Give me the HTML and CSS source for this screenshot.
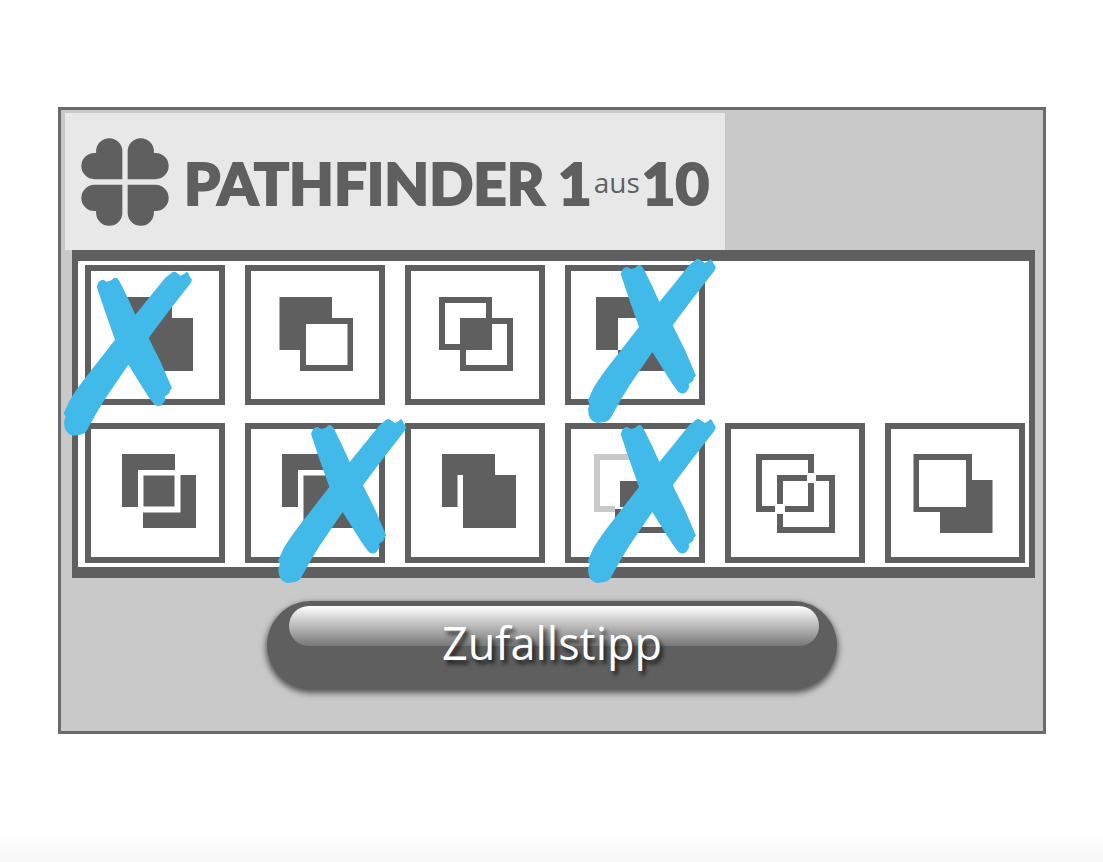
FILE: index.html
```html
<!DOCTYPE html>
<html lang="de">
<head>
    <meta charset="UTF-8">
    <title>Pathfinder 1 aus 10</title>
    <link rel="stylesheet" href="styles.css">
</head>
<body>
    <svg class="defs" aria-hidden="true">
        <defs>
            <path id="leaf" d="M217 237H133A39.500 39.500 0 0 1 133 158H138V153A39.500 39.500 0 0 1 217 153Z"/>
            <path id="cross" d="M212 72L218 58Q224 51 232 51L242 57L256 53L264 46Q270 44 274 47L280 55L305 105L328 156L380 92L418 45L440 28Q446 26 450 29L464 39L475 33L482 27L487 32L490 40L498 52L492 64L430 143L368 226L405 300L438 377L431 384L430 392L416 402L418 412L408 427Q398 434 386 427Q366 402 350 375L307 306L260 375Q235 410 215 445L180 507Q174 514 163 516L142 519Q134 518 128 513Q120 507 116 495L114 477L119 462L113 452L130 415Q150 380 190 330L267 231L240 155Z"/>
        </defs>
    </svg>
    <form class="ticket">
        <header class="head">
            <svg class="clover" viewBox="93 113 264 265" aria-hidden="true">
                <use href="#leaf"/>
                <use href="#leaf" transform="translate(450 0) scale(-1 1)"/>
                <use href="#leaf" transform="translate(0 491) scale(1 -1)"/>
                <use href="#leaf" transform="translate(450 491) scale(-1 -1)"/>
            </svg>
            <h1>PATHFINDER 1<small>aus</small>10</h1>
        </header>
        <div class="board">
            <label class="field">
                <input type="checkbox" aria-label="Vereinen" checked>
                <svg class="icon" viewBox="0 0 140 140"><path d="M35 32H87V53H108V106H55V85H35Z"/></svg>
                <svg class="cross" viewBox="177 7 420 420"><use href="#cross"/></svg>
            </label>
            <label class="field">
                <input type="checkbox" aria-label="Vorderes Objekt abziehen">
                <svg class="icon" viewBox="0 0 140 140"><path d="M34.500 32H87V53H108V106H55V85H34.500ZM61 59V100H102.500V59Z"/></svg>
            </label>
            <label class="field">
                <input type="checkbox" aria-label="Schnittmenge bilden">
                <svg class="icon" viewBox="0 0 140 140"><path class="line" d="M37 35H84V82H37ZM58 56H105V103H58Z"/><path d="M55 53H87V85H55Z"/></svg>
            </label>
            <label class="field">
                <input type="checkbox" aria-label="Schnittmenge entfernen" checked>
                <svg class="icon" viewBox="0 0 140 140"><path d="M31 32H84V85H31ZM53 53H106V106H53Z"/></svg>
                <svg class="cross" viewBox="45 45 420 420"><use href="#cross"/></svg>
            </label>
            <label class="field next-row">
                <input type="checkbox" aria-label="Fläche aufteilen">
                <svg class="icon" viewBox="0 0 140 140"><path d="M37 31H90V47H53V84H37ZM58.500 52.500H89.500V83.500H58.500ZM95.500 52H111V105H58V89.500H95.500Z"/></svg>
            </label>
            <label class="field">
                <input type="checkbox" aria-label="Überlappungsbereich entfernen" checked>
                <svg class="icon" viewBox="0 0 140 140"><path d="M37 31H90V47H53V84H37ZM58.500 52.500H111V105H58.500Z"/></svg>
                <svg class="cross" viewBox="14 39 420 420"><use href="#cross"/></svg>
            </label>
            <label class="field">
                <input type="checkbox" aria-label="Verdeckte Fläche entfernen">
                <svg class="icon" viewBox="0 0 140 140"><path d="M37 31H90V52H111V105H58V52H52.500V84H37Z"/></svg>
            </label>
            <label class="field">
                <input type="checkbox" aria-label="Schnittmengenfläche" checked>
                <svg class="icon" viewBox="0 0 140 140"><path class="line pale" d="M50 86H32V34H84V50"/><path class="line" d="M53 86V107H105V55H88"/><path d="M55 58H84V84H55Z"/></svg>
                <svg class="cross" viewBox="45 39 420 420"><use href="#cross"/></svg>
            </label>
            <label class="field">
                <input type="checkbox" aria-label="Kontur aufteilen">
                <svg class="icon" viewBox="0 0 140 140"><path class="line" d="M50 86H34V34H86V50M60 86H86V60M82 55H55V81M91 55H107V107H55V91"/></svg>
            </label>
            <label class="field">
                <input type="checkbox" aria-label="Hinteres Objekt abziehen">
                <svg class="icon" viewBox="0 0 140 140"><path d="M28.500 31H87V57H107.500V110H55V89H28.500ZM34 37V84H81V37Z"/></svg>
            </label>
        </div>
        <button class="random" type="button"><span>Zufallstipp</span></button>
    </form>
</body>
</html>
```
FILE: styles.css
```css
*{
    margin: 0;
    padding: 0;
    box-sizing: border-box;
}
body{
    min-height: 100vh;
    padding: 107px 57px 57px 58px;
    background: linear-gradient(to top, #f6f6f6, white 28px);
    font-family: "Open Sans", "Noto Sans", sans-serif;
    color: #5f5f5f;
}
.defs{
    position: absolute;
    width: 0;
    height: 0;
}
.ticket{
    display: flex;
    flex-direction: column;
    padding: 3px 4px 42px;
    border: 3px solid #6b6b6b;
    background: #c9c9c9;
}
.head{
    display: flex;
    align-items: center;
    align-self: flex-start;
    gap: 15px;
    height: 137px;
    padding: 0 16px;
    background: #e8e8e8;
}
.clover{
    width: 88px;
    height: 88px;
    fill: #5f5f5f;
}
h1{
    padding-top: 2px;
    font-family: Lato, sans-serif;
    font-size: 58px;
    font-weight: 900;
    line-height: 80px;
    white-space: nowrap;
    -webkit-text-stroke: 2px #5f5f5f;
}
h1 small{
    padding: 0 2px;
    font-family: "Open Sans", sans-serif;
    font-size: 28px;
    font-weight: 400;
    vertical-align: 12px;
    line-height: 28px;
    -webkit-text-stroke: 0;
}
.board{
    display: grid;
    grid-template-columns: repeat(6, 1fr);
    gap: 18px 20px;
    margin: 0 4px 0 7px;
    padding: 4px 4px 4px 7px;
    border: solid #5f5f5f;
    border-width: 11px 6px;
    background: white;
}
.field{
    position: relative;
    aspect-ratio: 1;
    cursor: pointer;
}
.next-row{
    grid-column: 1;
}
.field input{
    display: block;
    width: 100%;
    height: 100%;
    appearance: none;
    border: 6px solid #5f5f5f;
    cursor: pointer;
}
.icon,
.cross{
    position: absolute;
    top: 0;
    left: 0;
    width: 100%;
    height: 100%;
    pointer-events: none;
}
.icon{
    fill: #5f5f5f;
    fill-rule: evenodd;
}
.icon .line{
    fill: none;
    stroke: #5f5f5f;
    stroke-width: 6;
}
.icon .pale{
    stroke: #c9c9c9;
}
.cross{
    z-index: 1;
    display: none;
    overflow: visible;
    fill: #41b9e9;
}
.field input:checked ~ .cross{
    display: block;
}
.random{
    position: relative;
    align-self: center;
    width: 570px;
    max-width: 100%;
    height: 88px;
    margin-top: 23px;
    padding-bottom: 4px;
    border: 0;
    border-radius: 44px;
    background: #5f5f5f;
    box-shadow: 0 3px 6px 1px rgba(0,0,0,0.6);
    font-family: "Open Sans", sans-serif;
    font-size: 45px;
    line-height: 80px;
    color: white;
    text-shadow: 3px 4px 4px rgba(0,0,0,0.7);
    cursor: pointer;
}
/* glossy highlight */
.random::before{
    content: "";
    position: absolute;
    top: 5px;
    left: 22px;
    right: 18px;
    height: 40px;
    border-radius: 20px;
    background: linear-gradient(white, #777);
}
.random span{
    position: relative;
}
```
